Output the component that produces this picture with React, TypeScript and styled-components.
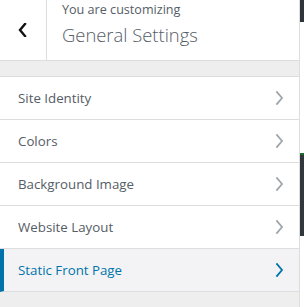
import styled, { createGlobalStyle } from "styled-components";

const GlobalStyle = createGlobalStyle`
  html, body {
    margin: 0;
    padding: 0;
    background: #fff;
  }
  body {
    font-family: "Open Sans", "Noto Sans", sans-serif;
  }
`;

const sections = [
  { id: "title_tagline", label: "Site Identity" },
  { id: "colors", label: "Colors" },
  { id: "background_image", label: "Background Image" },
  { id: "layout", label: "Website Layout" },
  { id: "static_front_page", label: "Static Front Page", active: true },
];

function Chevron({ dir, color }: { dir: "left" | "right"; color: string }) {
  const d = dir === "left" ? "M7 1 L2 7 L7 13" : "M2 1 L7 7 L2 13";
  return (
    <svg width="9" height="14" viewBox="0 0 9 14" aria-hidden="true">
      <path d={d} fill="none" stroke={color} strokeWidth={dir === "left" ? 2.4 : 1.8} strokeLinecap="square" />
    </svg>
  );
}

export default function App() {
  return (
    <>
      <GlobalStyle />
      <Screen>
        <Sidebar>
          <Header>
            <BackButton aria-label="Back">
              <Chevron dir="left" color="#111" />
            </BackButton>
            <HeaderTitle>
              <Subtitle>You are customizing</Subtitle>
              <Title>General Settings</Title>
            </HeaderTitle>
          </Header>
          <SectionList>
            {sections.map((s) => (
              <SectionRow key={s.id} $active={s.active}>
                <SectionLabel>{s.label}</SectionLabel>
                <Chevron dir="right" color={s.active ? "#0073aa" : "#a0a5aa"} />
              </SectionRow>
            ))}
          </SectionList>
        </Sidebar>
        <Preview>
          <AdminBar />
          <PreviewBlock $height={131} />
          <DarkBand />
        </Preview>
      </Screen>
    </>
  );
}

const Screen = styled.div`
  display: flex;
  width: 304px;
  height: 307px;
  overflow: hidden;
`;

const Sidebar = styled.div`
  flex: 0 0 299px;
  background: #eee;
  border-right: 1px solid #ddd;
`;

const Header = styled.div`
  display: flex;
  height: 60px;
  background: #fff;
  border-bottom: 1px solid #ddd;
`;

const BackButton = styled.button`
  flex: 0 0 47px;
  display: flex;
  align-items: center;
  justify-content: center;
  padding: 0 2px 0 0;
  border: none;
  border-right: 1px solid #ddd;
  background: #fff;
  cursor: pointer;
`;

const HeaderTitle = styled.div`
  display: flex;
  flex-direction: column;
  padding: 1px 0 0 15px;
  color: #555d66;
`;

const Subtitle = styled.span`
  font-size: 12.6px;
  line-height: 18px;
`;

const Title = styled.span`
  font-size: 18.4px;
  font-weight: 300;
  line-height: 32px;
`;

const SectionList = styled.div`
  margin-top: 15px;
  border-top: 1px solid #ddd;
`;

const SectionRow = styled.div<{ $active?: boolean }>`
  display: flex;
  align-items: center;
  justify-content: space-between;
  height: 42px;
  padding: 0 15px 0 18px;
  border-bottom: 1px solid #ddd;
  border-left: ${(p) => (p.$active ? "4px solid #0073aa" : "none")};
  padding-left: ${(p) => (p.$active ? "14px" : "18px")};
  background: ${(p) => (p.$active ? "#f3f3f5" : "#fff")};
  color: ${(p) => (p.$active ? "#0073aa" : "#555d66")};
  cursor: pointer;
`;

const SectionLabel = styled.span`
  font-size: 13.3px;
  line-height: 20px;
`;

const Preview = styled.div`
  flex: 1;
  display: flex;
  flex-direction: column;
  background: #fff;
`;

const AdminBar = styled.div`
  height: 22px;
  background: #2f333a;
`;

const PreviewBlock = styled.div<{ $height: number }>`
  height: ${(p) => p.$height}px;
  background: #fff;
`;

const DarkBand = styled.div`
  height: 81px;
  background: #32373c;
  border-top: 2px solid #1e6b2c;
`;
